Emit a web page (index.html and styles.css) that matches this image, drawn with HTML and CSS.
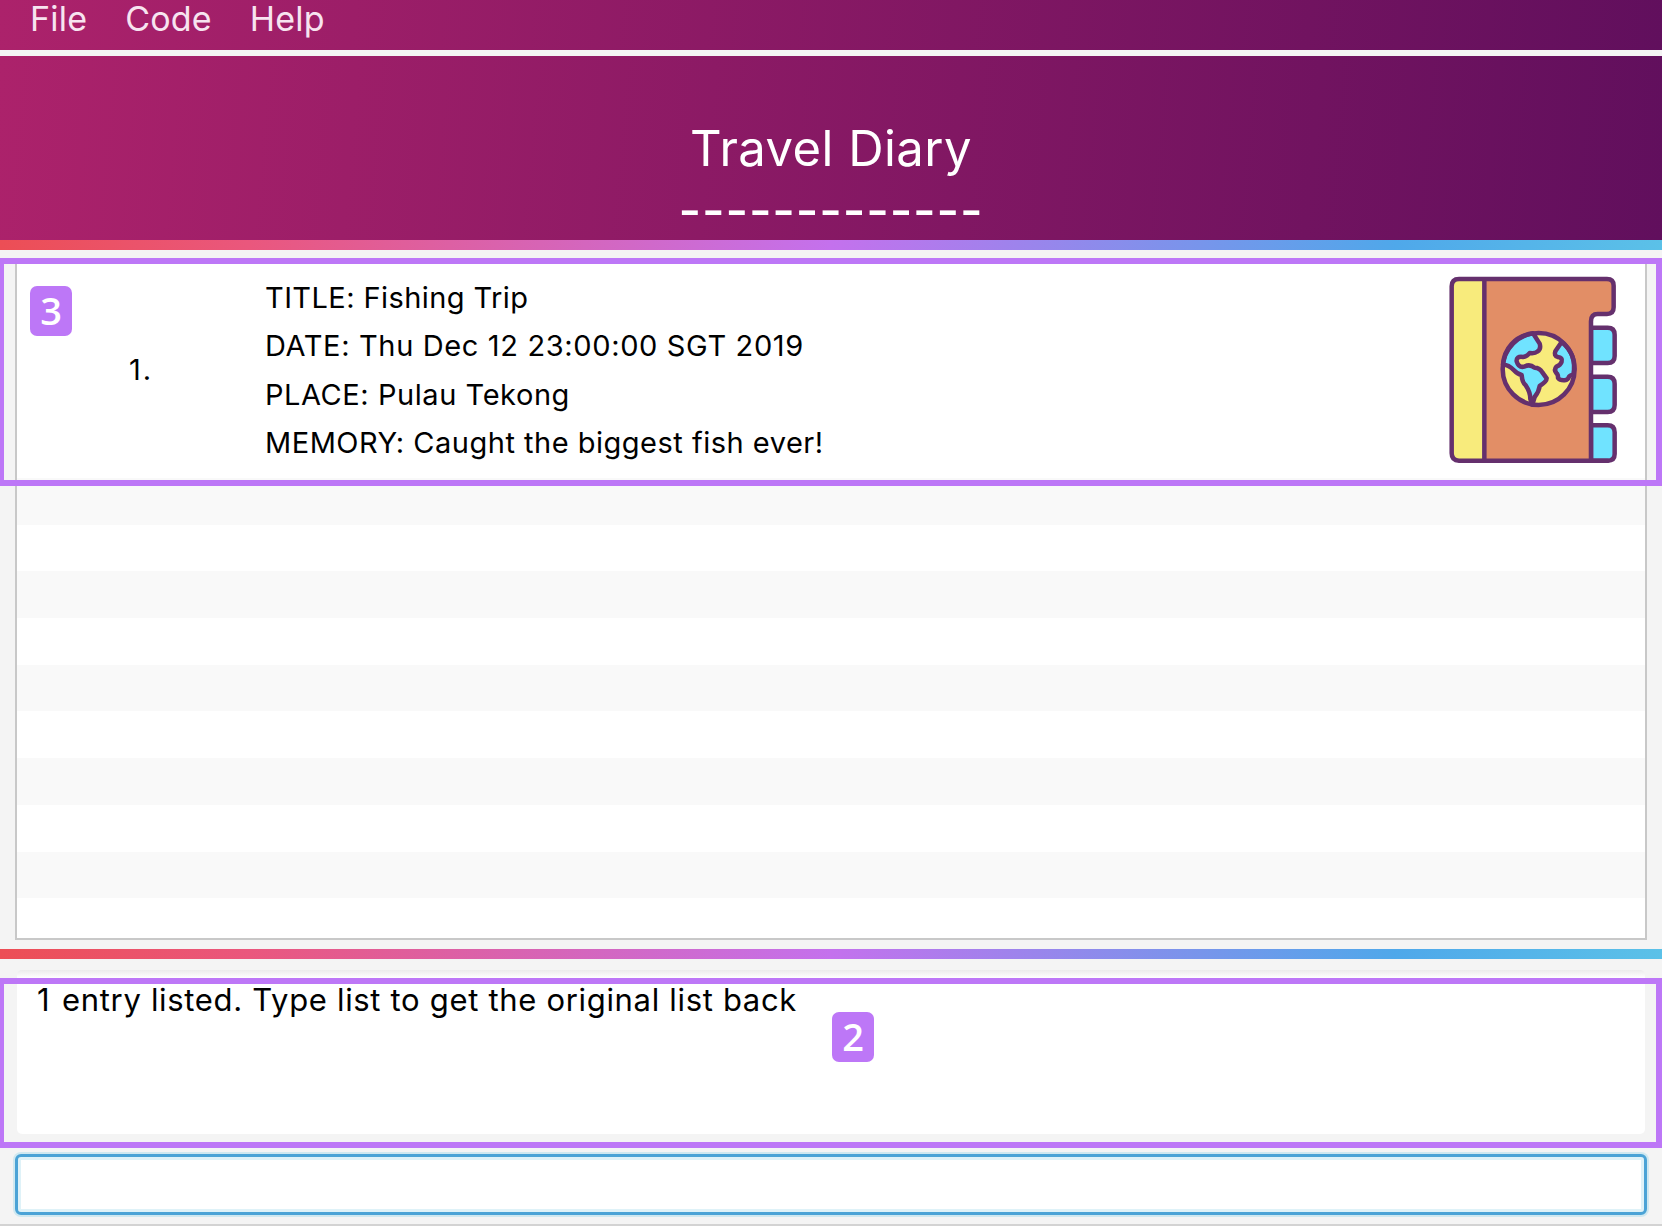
FILE: index.html
```html
<!DOCTYPE html>
<html lang="en">
<head>
<meta charset="utf-8">
<title>Travel Diary</title>
<link rel="stylesheet" href="styles.css">
</head>
<body>
<div class="window">
  <nav class="menu-bar">
    <span class="menu">File</span>
    <span class="menu">Code</span>
    <span class="menu">Help</span>
  </nav>
  <header class="banner">
    <h1 class="banner-title">Travel Diary</h1>
    <div class="banner-rule">-------------</div>
  </header>
  <div class="stripe"></div>
  <main class="list-pane">
    <div class="list">
      <article class="entry">
        <div class="entry-index">1.</div>
        <div class="entry-text">
          <p class="line line-title">TITLE: Fishing Trip</p>
          <p class="line line-date">DATE: Thu Dec 12 23:00:00 SGT 2019</p>
          <p class="line line-place">PLACE: Pulau Tekong</p>
          <p class="line line-memory">MEMORY: Caught the biggest fish ever!</p>
        </div>
        <svg class="entry-icon" viewBox="88 136 504 562" fill="none" stroke="#65306d" stroke-width="13.5" stroke-linejoin="round" stroke-linecap="round">
          <path fill="#70e3ff" d="M514 291H564Q585 291 585 312V376Q585 397 564 397H514Z"/>
          <path fill="#70e3ff" d="M514 438H564Q585 438 585 459V523Q585 544 564 544H514Z"/>
          <path fill="#70e3ff" d="M514 584H564Q585 584 585 605V670Q585 690 564 690H514Z"/>
          <path fill="#e28e66" stroke="none" d="M194 145H562Q582 145 582 165V230Q582 250 562 250H534Q514 250 514 272V690H194Z"/>
          <path fill="#f8eb7c" stroke="none" d="M194 145H118Q96 145 96 167V668Q96 690 118 690H194Z"/>
          <path d="M564 690H118Q96 690 96 668V167Q96 145 118 145H562Q582 145 582 165V230Q582 250 562 250H534Q514 250 514 272V690M194 145V690"/>
          <circle cx="357" cy="415" r="108" fill="#f8eb7c" stroke="none"/>
          <path fill="#70e3ff" d="M340 308L360 339Q365 355 353 363Q346 369 330 367Q322 378 310 379Q289 376 291 392Q297 412 314 408Q330 399 345 411Q360 411 368 425L381 443Q381 453 360 466Q358 483 345 499L338 522L332 505Q332 485 318 464Q307 455 306 433Q293 430 282 418Q266 401 250 402C253 356 284 316 340 308Z"/>
          <path fill="#70e3ff" d="M426 334L407 362Q402 375 414 379Q430 381 426 393Q423 404 410 408Q402 417 410 427Q416 432 415 442Q421 450 435 449Q446 448 448 438Q450 434 461 432Q473 372 426 334Z"/>
          <circle cx="357" cy="415" r="108"/>
        </svg>
      </article>
      <div class="empty-rows"></div>
    </div>
  </main>
  <div class="stripe"></div>
  <section class="result-pane">
    <div class="result"><p class="result-text"><span class="result-count">1</span> entry listed. Type list to get the original list back</p></div>
  </section>
  <div class="command-pane"><input class="command" type="text" aria-label="Command"></div>
  <div class="callout callout-list"></div>
  <div class="callout callout-result"></div>
  <div class="badge badge-list">3</div>
  <div class="badge badge-result">2</div>
</div>
</body>
</html>
```
FILE: styles.css
```css
* { box-sizing: border-box; }

body {
  margin: 0;
  background: #f4f4f4;
  color: #000;
  font-family: Inter, "Liberation Sans", sans-serif;
}

.window {
  position: relative;
  display: flex;
  flex-direction: column;
  width: 1662px;
  height: 1226px;
  overflow: hidden;
  border-bottom: 2px solid #d3d3d3;
}

.menu-bar, .banner { background: linear-gradient(95deg, #ac226b 0%, #610f5d 100%); }

.menu-bar {
  display: flex;
  gap: 38px;
  height: 50px;
  margin-bottom: 6px;
  padding-left: 30px;
}

.menu {
  color: #f7e4f0;
  font-size: 34px;
  letter-spacing: 0.2px;
  line-height: 38px;
}

.banner {
  height: 184px;
  padding-top: 63px;
  color: #fff;
  text-align: center;
}

.banner-title {
  margin: 0;
  font-size: 49px;
  font-weight: 400;
  letter-spacing: 0.45px;
  line-height: 60px;
}

.banner-rule {
  padding-top: 2px;
  font-size: 49px;
  font-weight: 500;
  letter-spacing: 0.8px;
  line-height: 60px;
}

.stripe {
  flex: none;
  height: 10px;
  background: linear-gradient(90deg, #ec4e55 0%, #ea577d 15%, #c471ed 50%, #4fa8ea 84%, #5bc1e8 100%);
}

.list-pane {
  height: 699px;
  padding: 9px 15px;
}

.list {
  display: flex;
  flex-direction: column;
  height: 681px;
  border: 2px solid #c8c8c8;
  background: #fff;
}

.entry {
  display: flex;
  flex: none;
  height: 216.6px;
}

.entry-index {
  width: 248px;
  padding: 89px 0 0 112px;
  font-size: 29px;
  letter-spacing: 2px;
  line-height: 40px;
}

.entry-text {
  flex: 1;
  padding-top: 12.5px;
}

.line {
  margin: 0;
  font-size: 29px;
  letter-spacing: 0.5px;
  line-height: 48.5px;
  white-space: nowrap;
}

.line-title { letter-spacing: 0.42px; }
.line-date { letter-spacing: 0.64px; }
.line-place { letter-spacing: 0.56px; }

.entry-icon {
  width: 168px;
  height: 187.3px;
  margin: 14.5px 28px 0 0;
}

.empty-rows {
  flex: 1;
  background: repeating-linear-gradient(#f9f9f9 0 46.7px, #fff 46.7px 93.4px);
}

.result-pane {
  height: 184px;
  padding: 11px 17px 0;
}

.result {
  height: 164px;
  padding: 8px 20px;
  border-radius: 5px;
  background: linear-gradient(#ebebeb 0, #fff 8px);
}

.result-text {
  margin: 0;
  font-size: 31px;
  letter-spacing: 0.68px;
  line-height: 44px;
}

.result-count { letter-spacing: 3px; }

.command-pane {
  padding: 11px 15px 0;
}

.command {
  display: block;
  width: 100%;
  height: 61px;
  border: 3px solid #4ba3d6;
  border-radius: 6px;
  outline: none;
  background: #fff;
  box-shadow: 0 0 0 2px #cfe8f0, inset 0 0 0 3px #dff2f8;
}

.callout {
  position: absolute;
  left: 0;
  width: 1662px;
  border: 6px solid #bd77f7;
  border-left-width: 4px;
}

.callout-list { top: 258px; height: 228px; }
.callout-result { top: 978px; height: 170px; }

.badge {
  position: absolute;
  width: 42px;
  height: 50px;
  border-radius: 7px;
  background: #bd77f7;
  color: #fff;
  font: 600 38px/48px "Open Sans", sans-serif;
  font-stretch: 92%;
  text-align: center;
}

.badge-list { top: 286px; left: 30px; }
.badge-result { top: 1012px; left: 832px; }
```
